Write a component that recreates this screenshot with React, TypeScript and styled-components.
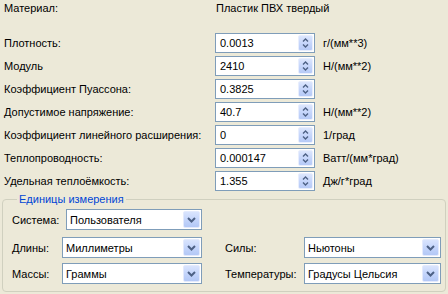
import React from 'react';
import styled, { createGlobalStyle } from 'styled-components';

const Global = createGlobalStyle`
  html, body { margin: 0; padding: 0; background: #ECE9D8; }
  body {
    font-family: Tahoma, "Liberation Sans", Arial, sans-serif;
    font-size: 11px;
    color: #000;
  }
  * { box-sizing: border-box; }
`;

const Page = styled.div`
  width: 448px;
  height: 294px;
  padding: 2px 2px 0 2px;
  display: flex;
  flex-direction: column;
  overflow: hidden;
`;

const MaterialRow = styled.div`
  display: grid;
  grid-template-columns: 212px auto;
  padding-left: 2px;
  line-height: 13px;
  height: 13px;
`;

const PropGrid = styled.div`
  margin-top: 18px;
  display: grid;
  grid-template-columns: 211px 100px auto;
  grid-auto-rows: 20px;
  row-gap: 3px;
  column-gap: 0;
  padding-left: 2px;
  align-items: center;
`;

const Label = styled.div`
  white-space: nowrap;
`;

const Unit = styled.div`
  padding-left: 8px;
  white-space: nowrap;
`;

const SpinBox = styled.div`
  height: 20px;
  border: 1px solid #7F9DB9;
  background: #fff;
  display: flex;
  align-items: stretch;
`;

const SpinValue = styled.div`
  flex: 1;
  padding-left: 4px;
  display: flex;
  align-items: center;
`;

const SpinButton = styled.div`
  width: 15px;
  margin: 1px 1px 1px 0;
  border-radius: 2px;
  background: linear-gradient(180deg, #DCE6FD 0%, #C6D6FB 50%, #B6CAF7 100%);
  border: 1px solid #E8EEFD;
  display: flex;
  align-items: center;
  justify-content: center;
`;

const Group = styled.fieldset`
  margin: 2px 0 0 0;
  padding: 3px 0 0 9px;
  border: 1px solid #D0D0BF;
  border-radius: 4px;
  height: 99px;
  min-width: 0;
`;

const Legend = styled.legend`
  color: #0046D5;
  padding: 0 2px;
  margin-left: 5px;
  line-height: 13px;
`;

const UnitRows = styled.div`
  display: flex;
  flex-direction: column;
`;

const SystemRow = styled.div`
  display: grid;
  grid-template-columns: 54px 136px;
  align-items: center;
  height: 21px;
`;

const PairGrid = styled.div`
  margin-top: 7px;
  display: grid;
  grid-template-columns: 50px 140px 23px 79px 137px;
  grid-auto-rows: 21px;
  row-gap: 5px;
  align-items: center;
`;

const Select = styled.div`
  height: 21px;
  border: 1px solid #7F9DB9;
  background: #fff;
  display: flex;
  align-items: stretch;
`;

const SelectValue = styled.div`
  flex: 1;
  padding-left: 3px;
  display: flex;
  align-items: center;
  white-space: nowrap;
`;

const SelectButton = styled.div`
  width: 17px;
  margin: 1px;
  border-radius: 2px;
  background: linear-gradient(180deg, #D9E4FD 0%, #C3D4FB 55%, #B3C8F6 100%);
  border: 1px solid #E3EAFD;
  display: flex;
  align-items: center;
  justify-content: center;
`;

const Spacer = styled.div``;

const SpinArrows = () => (
  <svg width="7" height="12" viewBox="0 0 7 12">
    <path d="M1 4.5 L3.5 2 L6 4.5" fill="none" stroke="#4D6185" strokeWidth="1.4" />
    <path d="M1 7.5 L3.5 10 L6 7.5" fill="none" stroke="#4D6185" strokeWidth="1.4" />
  </svg>
);

const DropArrow = () => (
  <svg width="9" height="6" viewBox="0 0 9 6">
    <path d="M1 1 L4.5 4.5 L8 1" fill="none" stroke="#4D6185" strokeWidth="2" />
  </svg>
);

const Spin: React.FC<{ value: string }> = ({ value }) => (
  <SpinBox>
    <SpinValue>{value}</SpinValue>
    <SpinButton>
      <SpinArrows />
    </SpinButton>
  </SpinBox>
);

const Combo: React.FC<{ value: string }> = ({ value }) => (
  <Select>
    <SelectValue>{value}</SelectValue>
    <SelectButton>
      <DropArrow />
    </SelectButton>
  </Select>
);

const props = [
  { label: 'Плотность:', value: '0.0013', unit: 'г/(мм**3)' },
  { label: 'Модуль', value: '2410', unit: 'Н/(мм**2)' },
  { label: 'Коэффициент Пуассона:', value: '0.3825', unit: '' },
  { label: 'Допустимое напряжение:', value: '40.7', unit: 'Н/(мм**2)' },
  { label: 'Коэффициент линейного расширения:', value: '0', unit: '1/град' },
  { label: 'Теплопроводность:', value: '0.000147', unit: 'Ватт/(мм*град)' },
  { label: 'Удельная теплоёмкость:', value: '1.355', unit: 'Дж/г*град' },
];

export default function App() {
  return (
    <>
      <Global />
      <Page>
        <MaterialRow>
          <Label>Материал:</Label>
          <Label>Пластик ПВХ твердый</Label>
        </MaterialRow>
        <PropGrid>
          {props.map((p) => (
            <React.Fragment key={p.label}>
              <Label>{p.label}</Label>
              <Spin value={p.value} />
              <Unit>{p.unit}</Unit>
            </React.Fragment>
          ))}
        </PropGrid>
        <Group>
          <Legend>Единицы измерения</Legend>
          <UnitRows>
            <SystemRow>
              <Label>Система:</Label>
              <Combo value="Пользователя" />
            </SystemRow>
            <PairGrid>
              <Label>Длины:</Label>
              <Combo value="Миллиметры" />
              <Spacer />
              <Label>Силы:</Label>
              <Combo value="Ньютоны" />
              <Label>Массы:</Label>
              <Combo value="Граммы" />
              <Spacer />
              <Label>Температуры:</Label>
              <Combo value="Градусы Цельсия" />
            </PairGrid>
          </UnitRows>
        </Group>
      </Page>
    </>
  );
}
